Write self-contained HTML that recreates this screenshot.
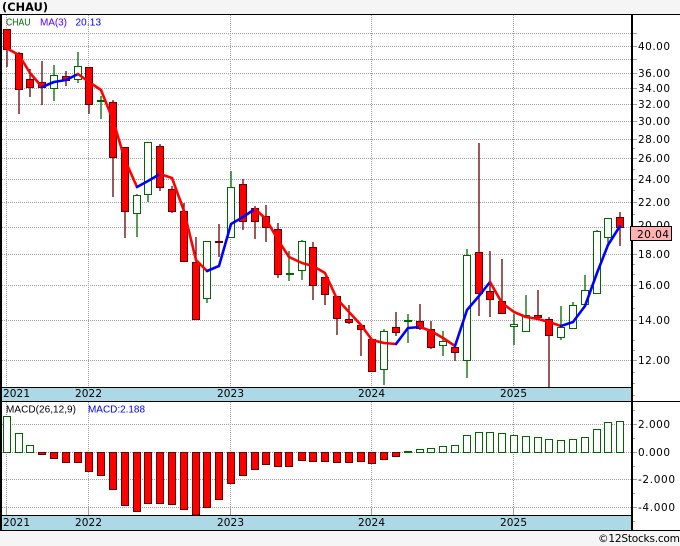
<!DOCTYPE html>
<html><head><meta charset="utf-8"><style>
html,body{margin:0;padding:0;background:#f5f5f5;width:680px;height:546px;overflow:hidden}
svg{display:block}
text{font-family:"DejaVu Sans","Liberation Sans",sans-serif;font-size:10.5px}
.leg text{font-family:"Liberation Sans","DejaVu Sans",sans-serif;font-size:10px}
</style></head><body>
<svg width="680" height="546" viewBox="0 0 680 546" xmlns="http://www.w3.org/2000/svg">
<rect width="680" height="546" fill="#f5f5f5"/>
<rect x="0" y="14" width="680" height="517" fill="#fff"/>
<g fill="none" stroke="#a0a0a0" stroke-dasharray="1 1" shape-rendering="crispEdges">
<path d="M2 33.5H632M2 46.5H632M2 59.5H632M2 73.5H632M2 88.5H632M2 104.5H632M2 121.5H632M2 139.5H632M2 158.5H632M2 179.5H632M2 202.5H632M2 227.5H632M2 254.5H632M2 285.5H632M2 320.5H632M2 360.5H632"/>
<path d="M2 424.5H632M2 452.5H632M2 479.5H632M2 507.5H632"/>
<path d="M6.5 15V387M88.5 15V387M230.5 15V387M371.5 15V387M513.5 15V387M6.5 402V515M88.5 402V515M230.5 402V515M371.5 402V515M513.5 402V515"/>
</g>
<path fill="none" stroke="#a0a0a0" shape-rendering="crispEdges" d="M6.5 508V515M88.5 508V515M230.5 508V515M371.5 508V515M513.5 508V515"/>
<!-- ticks -->
<path fill="none" stroke="#a0a0a0" shape-rendering="crispEdges" d="M632 33.5H637M632 46.5H637M632 59.5H637M632 73.5H637M632 88.5H637M632 104.5H637M632 121.5H637M632 139.5H637M632 148.5H635M632 158.5H637M632 169.5H635M632 179.5H637M632 190.5H635M632 202.5H637M632 214.5H635M632 254.5H637M632 264.5H635M632 274.5H635M632 285.5H637M632 296.5H635M632 308.5H635M632 320.5H637M632 340.5H635M632 350.5H635M632 360.5H637M632 372.5H635M632 383.5H635M632 395.5H635M632 410.5H635M632 424.5H637M632 438.5H635M632 452.5H637M632 466.5H635M632 479.5H637M632 493.5H635M632 507.5H637M632 521.5H635"/>
<!-- wicks -->
<g transform="translate(-0.5 0)" fill="none" stroke-width="1.3">
<path stroke="#660000" d="M7.5 29V67M19.5 52V114M30.5 69V97M42.5 61V105M66.5 71V86M89.5 67V114M113.5 100V197M125.5 147V238M160.5 144V191M172.5 186V213M184.5 203V261M196.5 237V320M219.5 224V257M243.5 179V230M255.5 206V239M266.5 205V242M278.5 223V278M313.5 242V300M325.5 277V305M337.5 296V335M349.5 305V324M361.5 324V356M372.5 339V371M396.5 312V336M420.5 304V330M431.5 321V349M455.5 347V361M479.5 143V316M490.5 251V317M502.5 259V313M538.5 290V318M549.5 317V387M620.5 212V246"/>
<path stroke="#006600" d="M54.5 65V101M78.5 52V83M101.5 96V119M137.5 194V237M148.5 142V202M207.5 241V303M231.5 171V237M289.5 251V281M302.5 240V280M384.5 329V385M408.5 314V343M443.5 331V356M467.5 249V378M514.5 314V345M526.5 295V332M561.5 306V340M573.5 302V329M585.5 275V304M597.5 230V294M608.5 218V245"/>
</g>
<!-- doji -->
<path fill="none" stroke="#660000" stroke-width="2" shape-rendering="crispEdges" d="M215 242H223"/>
<path fill="none" stroke="#006600" stroke-width="2" shape-rendering="crispEdges" d="M97 101H105M286 274H294M404 321H412"/>
<!-- red bodies -->
<g fill="#ff0000" stroke="#660000" shape-rendering="crispEdges">
<rect x="3.5" y="29.5" width="7" height="20"/>
<rect x="15.5" y="53.5" width="7" height="36"/>
<rect x="26.5" y="79.5" width="7" height="8"/>
<rect x="38.5" y="82.5" width="7" height="5"/>
<rect x="62.5" y="76.5" width="7" height="4"/>
<rect x="85.5" y="67.5" width="7" height="37"/>
<rect x="109.5" y="102.5" width="7" height="55"/>
<rect x="121.5" y="147.5" width="7" height="64"/>
<rect x="156.5" y="146.5" width="7" height="41"/>
<rect x="168.5" y="189.5" width="7" height="22"/>
<rect x="180.5" y="211.5" width="7" height="50"/>
<rect x="192.5" y="262.5" width="7" height="57"/>
<rect x="239.5" y="184.5" width="7" height="37"/>
<rect x="251.5" y="208.5" width="7" height="13"/>
<rect x="262.5" y="216.5" width="7" height="11"/>
<rect x="274.5" y="229.5" width="7" height="45"/>
<rect x="309.5" y="247.5" width="7" height="38"/>
<rect x="321.5" y="277.5" width="7" height="17"/>
<rect x="333.5" y="296.5" width="7" height="22"/>
<rect x="345.5" y="319.5" width="7" height="3"/>
<rect x="357.5" y="325.5" width="7" height="4"/>
<rect x="368.5" y="339.5" width="7" height="32"/>
<rect x="392.5" y="327.5" width="7" height="5"/>
<rect x="416.5" y="321.5" width="7" height="7"/>
<rect x="427.5" y="329.5" width="7" height="18"/>
<rect x="451.5" y="347.5" width="7" height="5"/>
<rect x="475.5" y="252.5" width="7" height="41"/>
<rect x="486.5" y="291.5" width="7" height="8"/>
<rect x="498.5" y="301.5" width="7" height="12"/>
<rect x="534.5" y="315.5" width="7" height="2"/>
<rect x="545.5" y="319.5" width="7" height="16"/>
<rect x="616.5" y="217.5" width="7" height="10"/>
</g>
<!-- green bodies -->
<g fill="#fff" stroke="#006600" shape-rendering="crispEdges">
<rect x="50.5" y="75.5" width="7" height="13"/>
<rect x="74.5" y="66.5" width="7" height="13"/>
<rect x="133.5" y="195.5" width="7" height="18"/>
<rect x="144.5" y="142.5" width="7" height="52"/>
<rect x="203.5" y="241.5" width="7" height="57"/>
<rect x="227.5" y="187.5" width="7" height="50"/>
<rect x="298.5" y="241.5" width="7" height="29"/>
<rect x="380.5" y="331.5" width="7" height="38"/>
<rect x="439.5" y="341.5" width="7" height="4"/>
<rect x="463.5" y="255.5" width="7" height="105"/>
<rect x="510.5" y="324.5" width="7" height="2"/>
<rect x="522.5" y="315.5" width="7" height="16"/>
<rect x="557.5" y="327.5" width="7" height="10"/>
<rect x="569.5" y="305.5" width="7" height="23"/>
<rect x="581.5" y="290.5" width="7" height="14"/>
<rect x="593.5" y="231.5" width="7" height="62"/>
<rect x="604.5" y="218.5" width="7" height="19"/>
</g>
<!-- MA line -->
<g fill="none" stroke-width="2.6" stroke-linejoin="round" stroke-linecap="round">
<polyline stroke="#ff0000" points="8,49 19,55 30,73 42,87"/>
<polyline stroke="#0000ff" points="42,87 54,82 66,80 78,74"/>
<polyline stroke="#ff0000" points="78,74 89,82 101,90 113,120 125,160 137,187"/>
<polyline stroke="#0000ff" points="137,187 148,181 160,174"/>
<polyline stroke="#ff0000" points="160,174 172,178 184,211 196,260 207,271"/>
<polyline stroke="#0000ff" points="207,271 219,266 231,224 243,217 255,209"/>
<polyline stroke="#ff0000" points="255,209 266,219 278,240 289,257 302,263 313,266 325,273 337,299 349,312 361,325 372,340 384,343 396,344"/>
<polyline stroke="#0000ff" points="396,344 408,328 420,327"/>
<polyline stroke="#ff0000" points="420,327 431,331 443,338 455,346"/>
<polyline stroke="#0000ff" points="455,346 467,310 479,296 490,282"/>
<polyline stroke="#ff0000" points="490,282 502,303 514,312 526,317 538,319 549,322 561,326"/>
<polyline stroke="#0000ff" points="561,326 573,322 585,306 597,273 608,245 620,226"/>
</g>
<!-- MACD red -->
<g fill="#ff0000" stroke="#660000" shape-rendering="crispEdges">
<rect x="38.5" y="452.5" width="7" height="2"/>
<rect x="50.5" y="452.5" width="7" height="6"/>
<rect x="62.5" y="452.5" width="7" height="10"/>
<rect x="74.5" y="452.5" width="7" height="10"/>
<rect x="85.5" y="452.5" width="7" height="19"/>
<rect x="97.5" y="452.5" width="7" height="23"/>
<rect x="109.5" y="452.5" width="7" height="37"/>
<rect x="121.5" y="452.5" width="7" height="53"/>
<rect x="133.5" y="452.5" width="7" height="59"/>
<rect x="144.5" y="452.5" width="7" height="51"/>
<rect x="156.5" y="452.5" width="7" height="51"/>
<rect x="168.5" y="452.5" width="7" height="52"/>
<rect x="180.5" y="452.5" width="7" height="57"/>
<rect x="192.5" y="452.5" width="7" height="62.5"/>
<rect x="203.5" y="452.5" width="7" height="55"/>
<rect x="215.5" y="452.5" width="7" height="47"/>
<rect x="227.5" y="452.5" width="7" height="31"/>
<rect x="239.5" y="452.5" width="7" height="23"/>
<rect x="251.5" y="452.5" width="7" height="17"/>
<rect x="262.5" y="452.5" width="7" height="12"/>
<rect x="274.5" y="452.5" width="7" height="14"/>
<rect x="285.5" y="452.5" width="7" height="14"/>
<rect x="298.5" y="452.5" width="7" height="8"/>
<rect x="309.5" y="452.5" width="7" height="9"/>
<rect x="321.5" y="452.5" width="7" height="9"/>
<rect x="333.5" y="452.5" width="7" height="10"/>
<rect x="345.5" y="452.5" width="7" height="10"/>
<rect x="357.5" y="452.5" width="7" height="9"/>
<rect x="368.5" y="452.5" width="7" height="11"/>
<rect x="380.5" y="452.5" width="7" height="7"/>
<rect x="392.5" y="452.5" width="7" height="4"/>
</g>
<!-- MACD green -->
<g fill="#fff" stroke="#006600" shape-rendering="crispEdges">
<rect x="3.5" y="416.5" width="7" height="36"/>
<rect x="15.5" y="433.5" width="7" height="19"/>
<rect x="26.5" y="445.5" width="7" height="7"/>
<rect x="404.5" y="451.5" width="7" height="1" fill="#006600"/>
<rect x="416.5" y="449.5" width="7" height="3"/>
<rect x="427.5" y="448.5" width="7" height="4"/>
<rect x="439.5" y="446.5" width="7" height="6"/>
<rect x="451.5" y="445.5" width="7" height="7"/>
<rect x="463.5" y="435.5" width="7" height="17"/>
<rect x="475.5" y="432.5" width="7" height="20"/>
<rect x="486.5" y="432.5" width="7" height="20"/>
<rect x="498.5" y="433.5" width="7" height="19"/>
<rect x="510.5" y="435.5" width="7" height="17"/>
<rect x="522.5" y="436.5" width="7" height="16"/>
<rect x="534.5" y="437.5" width="7" height="15"/>
<rect x="545.5" y="439.5" width="7" height="13"/>
<rect x="557.5" y="440.5" width="7" height="12"/>
<rect x="569.5" y="439.5" width="7" height="13"/>
<rect x="581.5" y="437.5" width="7" height="15"/>
<rect x="593.5" y="429.5" width="7" height="23"/>
<rect x="604.5" y="422.5" width="7" height="30"/>
<rect x="616.5" y="421.5" width="7" height="31"/>
</g>
<!-- date bars -->
<rect x="2" y="388" width="630" height="13" fill="#add8e6"/>
<rect x="2" y="516" width="630" height="14" fill="#add8e6"/>
<!-- frame -->
<g fill="#000" shape-rendering="crispEdges">
<rect x="0" y="14" width="680" height="1"/>
<rect x="0" y="14" width="2" height="517"/>
<rect x="631" y="14" width="2" height="517"/>
<rect x="0" y="387" width="632" height="1"/>
<rect x="0" y="401" width="680" height="1"/>
<rect x="0" y="515" width="632" height="1"/>
<rect x="0" y="530" width="680" height="1"/>
</g>
<!-- text -->
<text x="2" y="11" font-weight="bold" style="font-size:11.3px" textLength="46" fill="#000">(CHAU)</text>
<g class="leg">
<text x="6" y="25.5" fill="#006600" textLength="24.5" lengthAdjust="spacingAndGlyphs">CHAU</text>
<text x="40" y="25.5" fill="#5500ff" textLength="27">MA(3)</text>
<text x="75.5" y="25.5" fill="#0000ff" textLength="25.5">20.13</text>
<text x="6" y="412.5" fill="#000" textLength="70">MACD(26,12,9)</text>
<text x="88" y="412.5" fill="#0000ff" textLength="57">MACD:2.188</text>
</g>
<g fill="#000" style="font-size:10.6px">
<text x="3" y="397" textLength="27">2021</text><text x="75" y="397" textLength="27">2022</text><text x="217" y="397" textLength="27">2023</text><text x="358" y="397" textLength="27">2024</text><text x="500" y="397" textLength="27">2025</text>
<text x="3" y="526" textLength="27">2021</text><text x="75" y="526" textLength="27">2022</text><text x="217" y="526" textLength="27">2023</text><text x="358" y="526" textLength="27">2024</text><text x="500" y="526" textLength="27">2025</text>
</g>
<g fill="#000" style="font-size:10.6px">
<text x="638" y="50" textLength="32">40.00</text>
<text x="638" y="77" textLength="32">36.00</text>
<text x="638" y="92" textLength="32">34.00</text>
<text x="638" y="108" textLength="32">32.00</text>
<text x="638" y="125" textLength="32">30.00</text>
<text x="638" y="143" textLength="32">28.00</text>
<text x="638" y="162" textLength="32">26.00</text>
<text x="638" y="183" textLength="32">24.00</text>
<text x="638" y="206" textLength="32">22.00</text>
<text x="638" y="229" textLength="32">20.00</text>
<text x="638" y="258" textLength="32">18.00</text>
<text x="638" y="289" textLength="32">16.00</text>
<text x="638" y="324" textLength="32">14.00</text>
<text x="638" y="364" textLength="32">12.00</text>
<text x="638" y="428" textLength="32">2.000</text>
<text x="638" y="456" textLength="32">0.000</text>
<text x="638" y="483" textLength="37">-2.000</text>
<text x="638" y="511" textLength="37">-4.000</text>
</g>
<rect x="630.5" y="226.5" width="41" height="14" fill="#ffb0b0" stroke="#000" shape-rendering="crispEdges"/>
<text x="637" y="238" textLength="32" fill="#000" style="font-size:10.6px">20.04</text>
<text x="598" y="542" textLength="82" fill="#000" style="font-size:10.6px">©12Stocks.com</text>
</svg>
</body></html>
